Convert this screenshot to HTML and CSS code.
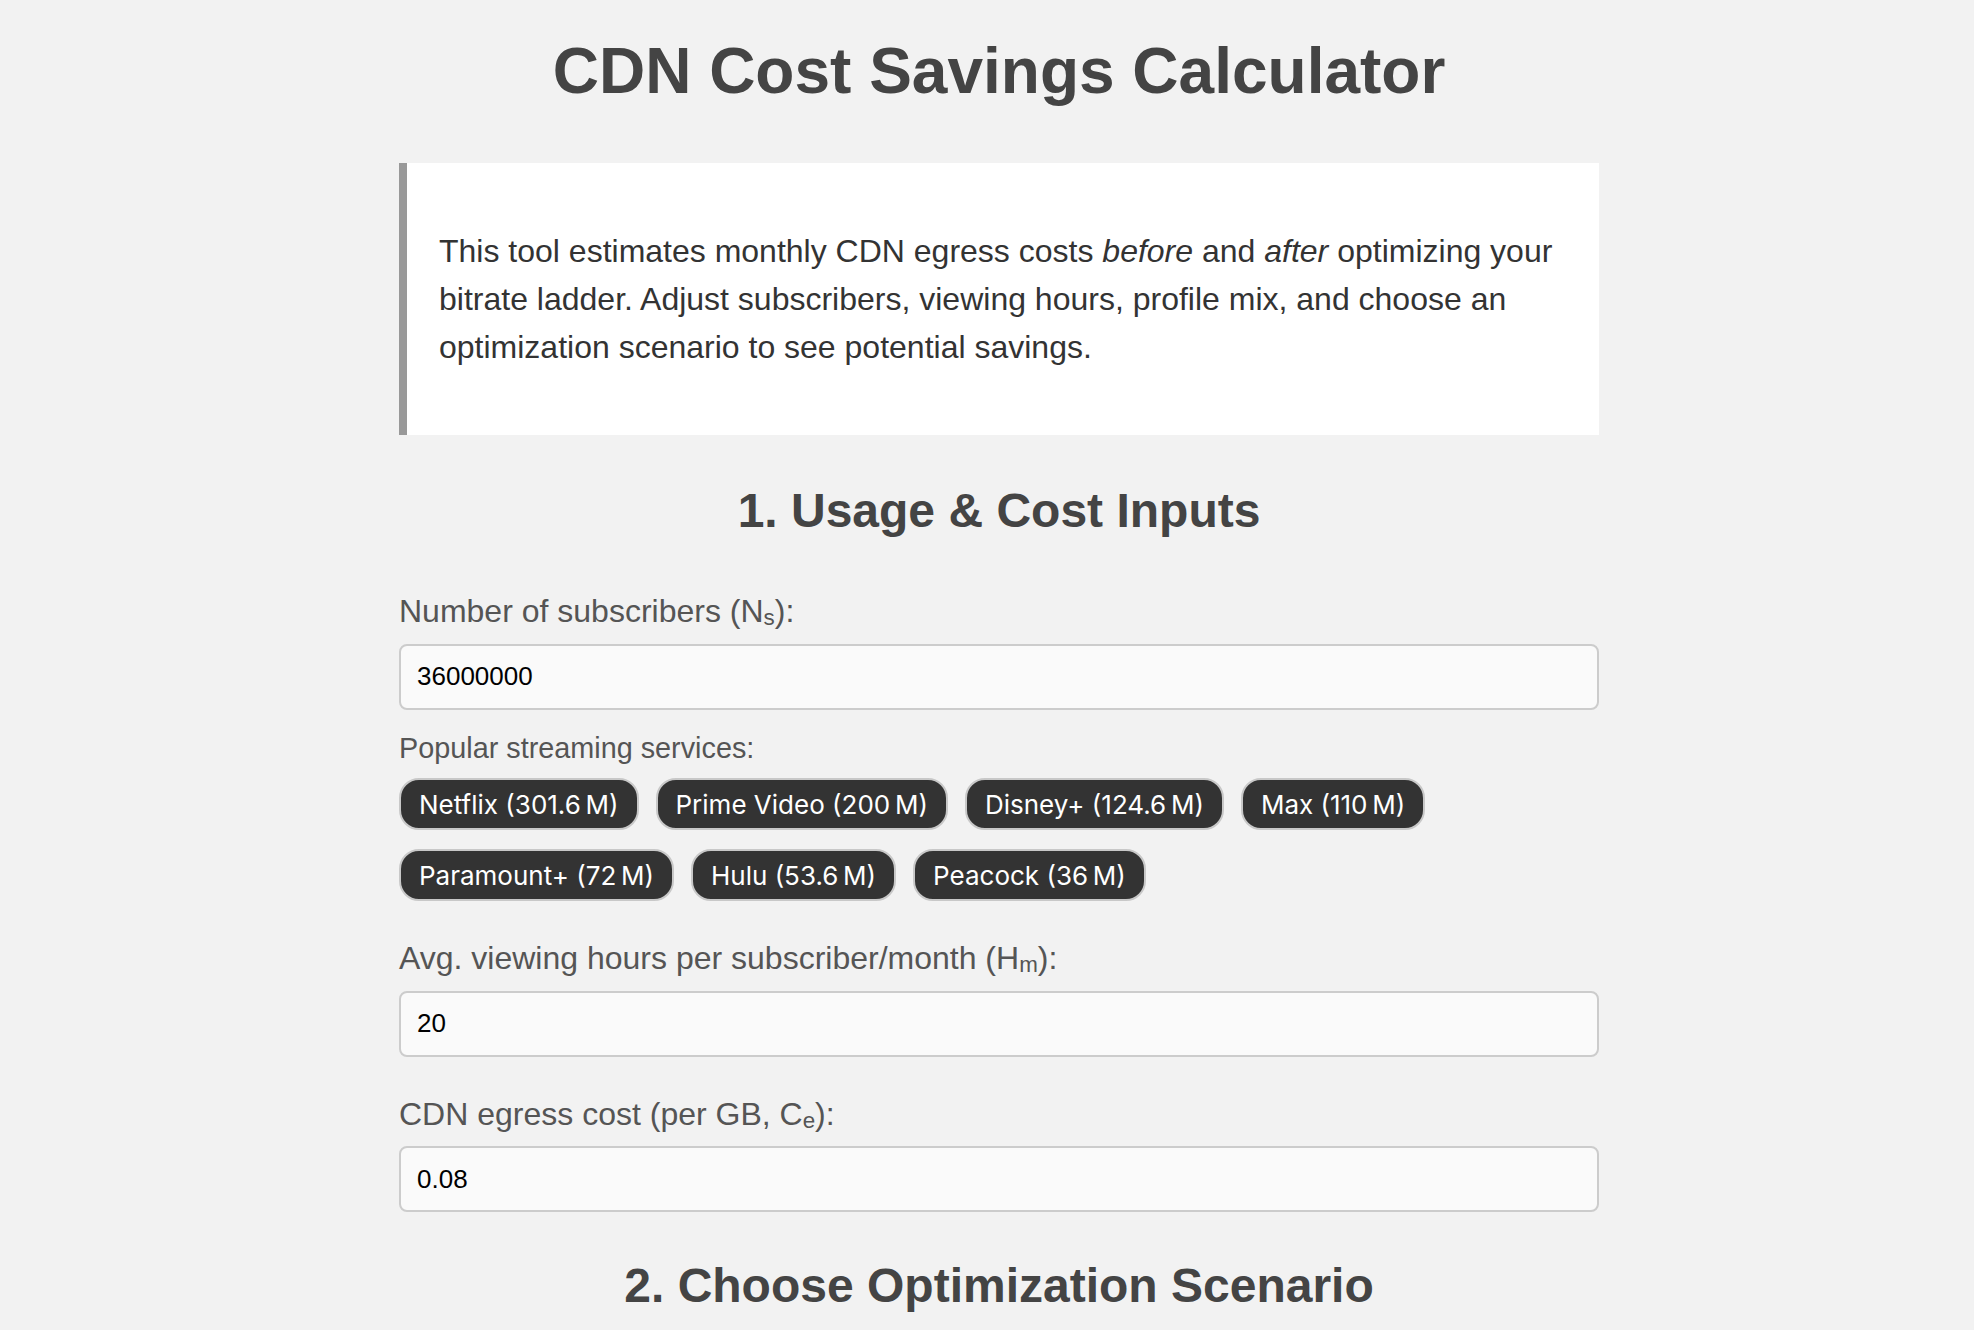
FILE: index.html
```html
<!DOCTYPE html>
<html lang="en">
<head>
    <meta charset="UTF-8">
    <meta name="viewport" content="width=device-width, initial-scale=1.0">
    <title>CDN Cost Savings Calculator</title>
    <link rel="stylesheet" href="styles.css">
</head>
<body>
    <div class="page">
        <h1>CDN Cost Savings Calculator</h1>

        <div class="intro">
            <p>This tool estimates monthly CDN egress costs <em>before</em> and <em>after</em> optimizing your bitrate ladder. Adjust subscribers, viewing hours, profile mix, and choose an optimization scenario to see potential savings.</p>
        </div>

        <h2>1. Usage &amp; Cost Inputs</h2>

        <div class="field">
            <label for="subscribers">Number of subscribers (N<sub>s</sub>):</label>
            <input type="text" id="subscribers" value="36000000">
            <div class="presets-label">Popular streaming services:</div>
            <div class="presets">
                <button class="preset" data-value="301600000">Netflix (301.6&#8239;M)</button>
                <button class="preset" data-value="200000000">Prime Video (200&#8239;M)</button>
                <button class="preset" data-value="124600000">Disney+ (124.6&#8239;M)</button>
                <button class="preset" data-value="110000000">Max (110&#8239;M)</button>
                <button class="preset" data-value="72000000">Paramount+ (72&#8239;M)</button>
                <button class="preset" data-value="53600000">Hulu (53.6&#8239;M)</button>
                <button class="preset" data-value="36000000">Peacock (36&#8239;M)</button>
            </div>
        </div>

        <div class="field">
            <label for="hours">Avg. viewing hours per subscriber/month (H<sub>m</sub>):</label>
            <input type="text" id="hours" value="20">
        </div>

        <div class="field">
            <label for="egress">CDN egress cost (per GB, C<sub>e</sub>):</label>
            <input type="text" id="egress" value="0.08">
        </div>

        <h2 class="next">2. Choose Optimization Scenario</h2>
    </div>

    <script>
        // Rellenar el número de suscriptores al pulsar un servicio
        document.querySelectorAll('.preset').forEach(btn => {
            btn.addEventListener('click', () => {
                document.getElementById('subscribers').value = btn.dataset.value;
            });
        });
    </script>
</body>
</html>
```

FILE: styles.css
```css
body {
    background-color: #f2f2f2;
    font-family: "Liberation Sans", Arial, sans-serif;
    color: #333;
    margin: 0;
    padding: 0;
}
.page {
    width: 1200px;
    margin: 0 auto;
    padding-left: 24px;
}
h1 {
    font-size: 64px;
    line-height: 1.2;
    color: #444;
    text-align: center;
    margin: 33px 0 53px;
}
h2 {
    font-size: 48px;
    line-height: 1.2;
    color: #444;
    text-align: center;
    margin: 47px 0 53px;
}
h2.next {
    margin-top: 45px;
}

/* Caja de introducción */
.intro {
    background: #fff;
    border-left: 8px solid #999;
    padding: 32px 32px 32px;
}
.intro p {
    font-size: 32px;
    line-height: 48px;
    margin: 32px 0;
    color: #333;
}

/* Campos del formulario */
.field {
    margin-bottom: 38px;
}
.field label {
    display: block;
    font-size: 32px;
    line-height: 1.2;
    color: #555;
    margin-bottom: 13px;
}
.field sub {
    font-size: 0.7em;
    line-height: 0;
    vertical-align: -0.15em;
}
.field input {
    display: block;
    width: 100%;
    height: 66px;
    box-sizing: border-box;
    padding: 0 16px;
    border: 2px solid #ccc;
    border-radius: 8px;
    background: #fafafa;
    font-family: "Liberation Sans", Arial, sans-serif;
    font-size: 26px;
    color: #000;
}

/* Botones de servicios */
.presets-label {
    font-size: 28.8px;
    line-height: 1.2;
    color: #555;
    margin-top: 21px;
}
.presets {
    display: flex;
    flex-wrap: wrap;
    gap: 19px 17px;
    margin-top: 13px;
}
.preset {
    height: 52px;
    box-sizing: border-box;
    padding: 0 18px;
    background-color: #333;
    color: #fff;
    border: 2px solid #c8c8c8;
    border-radius: 20px;
    font-family: Inter, "Liberation Sans", sans-serif;
    font-size: 26px;
    cursor: pointer;
}
.preset:hover {
    background-color: #444;
}
```
